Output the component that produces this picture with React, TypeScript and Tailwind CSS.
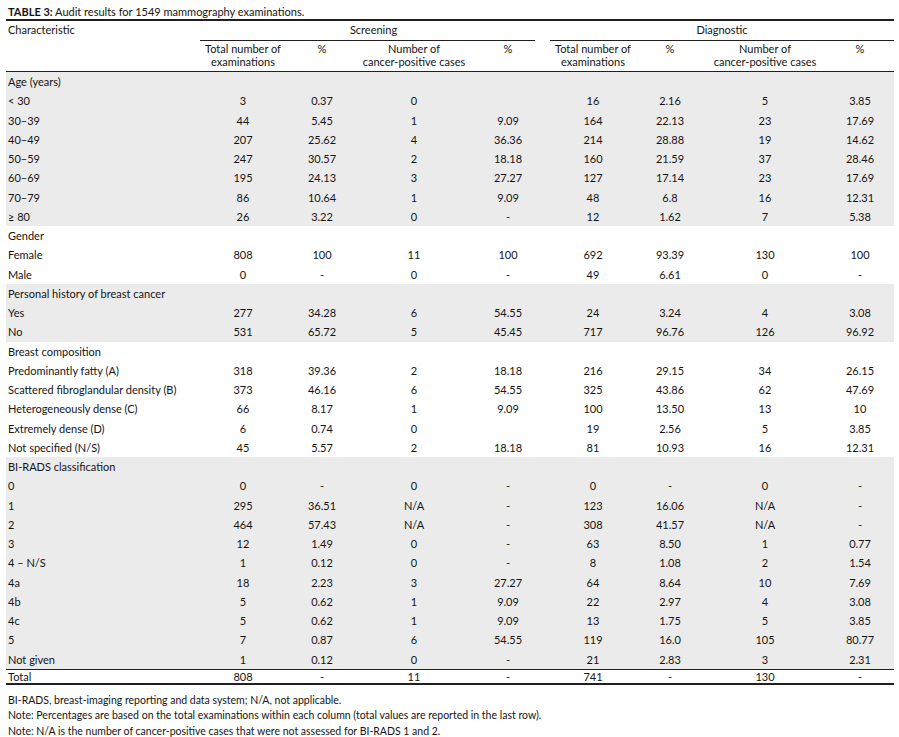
import React from "react";

type Row = { label: string; v?: string[]; head?: boolean };

const sections: { shaded: boolean; rows: Row[] }[] = [
  {
    shaded: true,
    rows: [
      { label: "Age (years)", head: true },
      { label: "< 30", v: ["3", "0.37", "0", "", "16", "2.16", "5", "3.85"] },
      { label: "30–39", v: ["44", "5.45", "1", "9.09", "164", "22.13", "23", "17.69"] },
      { label: "40–49", v: ["207", "25.62", "4", "36.36", "214", "28.88", "19", "14.62"] },
      { label: "50–59", v: ["247", "30.57", "2", "18.18", "160", "21.59", "37", "28.46"] },
      { label: "60–69", v: ["195", "24.13", "3", "27.27", "127", "17.14", "23", "17.69"] },
      { label: "70–79", v: ["86", "10.64", "1", "9.09", "48", "6.8", "16", "12.31"] },
      { label: "≥ 80", v: ["26", "3.22", "0", "-", "12", "1.62", "7", "5.38"] },
    ],
  },
  {
    shaded: false,
    rows: [
      { label: "Gender", head: true },
      { label: "Female", v: ["808", "100", "11", "100", "692", "93.39", "130", "100"] },
      { label: "Male", v: ["0", "-", "0", "-", "49", "6.61", "0", "-"] },
    ],
  },
  {
    shaded: true,
    rows: [
      { label: "Personal history of breast cancer", head: true },
      { label: "Yes", v: ["277", "34.28", "6", "54.55", "24", "3.24", "4", "3.08"] },
      { label: "No", v: ["531", "65.72", "5", "45.45", "717", "96.76", "126", "96.92"] },
    ],
  },
  {
    shaded: false,
    rows: [
      { label: "Breast composition", head: true },
      { label: "Predominantly fatty (A)", v: ["318", "39.36", "2", "18.18", "216", "29.15", "34", "26.15"] },
      { label: "Scattered fibroglandular density (B)", v: ["373", "46.16", "6", "54.55", "325", "43.86", "62", "47.69"] },
      { label: "Heterogeneously dense (C)", v: ["66", "8.17", "1", "9.09", "100", "13.50", "13", "10"] },
      { label: "Extremely dense (D)", v: ["6", "0.74", "0", "", "19", "2.56", "5", "3.85"] },
      { label: "Not specified (N/S)", v: ["45", "5.57", "2", "18.18", "81", "10.93", "16", "12.31"] },
    ],
  },
  {
    shaded: true,
    rows: [
      { label: "BI-RADS classification", head: true },
      { label: "0", v: ["0", "-", "0", "-", "0", "-", "0", "-"] },
      { label: "1", v: ["295", "36.51", "N/A", "-", "123", "16.06", "N/A", "-"] },
      { label: "2", v: ["464", "57.43", "N/A", "-", "308", "41.57", "N/A", "-"] },
      { label: "3", v: ["12", "1.49", "0", "-", "63", "8.50", "1", "0.77"] },
      { label: "4 – N/S", v: ["1", "0.12", "0", "-", "8", "1.08", "2", "1.54"] },
      { label: "4a", v: ["18", "2.23", "3", "27.27", "64", "8.64", "10", "7.69"] },
      { label: "4b", v: ["5", "0.62", "1", "9.09", "22", "2.97", "4", "3.08"] },
      { label: "4c", v: ["5", "0.62", "1", "9.09", "13", "1.75", "5", "3.85"] },
      { label: "5", v: ["7", "0.87", "6", "54.55", "119", "16.0", "105", "80.77"] },
      { label: "Not given", v: ["1", "0.12", "0", "-", "21", "2.83", "3", "2.31"] },
    ],
  },
];

const grid =
  "grid grid-cols-[194px_86px_72px_112px_76px_94px_60px_130px_60px_4px]";

function DataRow({ r, h }: { r: Row; h: string }) {
  return (
    <div className={`${grid} ${h} items-center`}>
      <div className="pl-[2px] whitespace-nowrap">{r.label}</div>
      {(r.v ?? ["", "", "", "", "", "", "", ""]).map((x, i) => (
        <div key={i} className="text-center">
          {x}
        </div>
      ))}
      <div />
    </div>
  );
}

export default function App() {
  return (
    <div
      className="w-[899px] h-[737px] bg-white text-[#141414] text-[11px] leading-[13px] pl-[6px] pt-[5px]"
      style={{ fontFamily: "Lato, 'Open Sans', sans-serif" }}
    >
      <div className="w-[888px]">
        <div className="h-[14px] pl-[2px]">
          <span className="font-bold">TABLE 3:</span> Audit results for 1549 mammography
          examinations.
        </div>
        <div className="border-t-2 border-[#231f20]" />
        {/* Group header */}
        <div className={`${grid} h-[20px]`}>
          <div className="pl-[2px] pt-[2px]">Characteristic</div>
          <div className="col-span-4 mr-[11px] border-b border-[#231f20] pt-[2px] pl-[12px] text-center">
            Screening
          </div>
          <div className="col-span-5 ml-[4px] border-b border-[#231f20] pt-[2px] text-center">
            Diagnostic
          </div>
        </div>
        {/* Sub header */}
        <div className={`${grid} h-[31px] pt-[1px] border-b border-[#231f20]`}>
          <div />
          <div className="text-center">
            Total number of
            <br />
            examinations
          </div>
          <div className="text-center">%</div>
          <div className="text-center">
            Number of
            <br />
            cancer-positive cases
          </div>
          <div className="text-center">%</div>
          <div className="text-center">
            Total number of
            <br />
            examinations
          </div>
          <div className="text-center">%</div>
          <div className="text-center">
            Number of
            <br />
            cancer-positive cases
          </div>
          <div className="text-center">%</div>
          <div />
        </div>
        {/* Body */}
        <div className="border-b border-[#231f20]">
          {sections.map((s, si) => (
            <div key={si} className={s.shaded ? "bg-[#ebebeb]" : "bg-white"}>
              {s.rows.map((r, ri) => (
                <DataRow key={ri} r={r} h="h-[19.25px]" />
              ))}
            </div>
          ))}
        </div>
        <div className="border-b-2 border-[#231f20]">
          <DataRow
            r={{ label: "Total", v: ["808", "-", "11", "-", "741", "-", "130", "-"] }}
            h="h-[13px]"
          />
        </div>
        <div className="mt-[8px] pl-[2px] text-[10.5px] leading-[15.5px]">
          <div>BI-RADS, breast-imaging reporting and data system; N/A, not applicable.</div>
          <div>
            Note: Percentages are based on the total examinations within each column (total
            values are reported in the last row).
          </div>
          <div>
            Note: N/A is the number of cancer-positive cases that were not assessed for BI-RADS 1
            and 2.
          </div>
        </div>
      </div>
    </div>
  );
}
